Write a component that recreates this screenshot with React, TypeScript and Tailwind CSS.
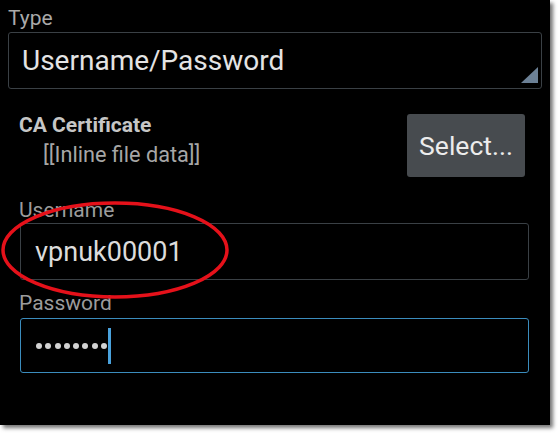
const font = { fontFamily: "Roboto, 'Noto Sans', sans-serif" };

export default function App() {
  return (
    <div className="w-[558px] h-[433px] bg-white" style={font}>
      <div className="relative w-[550px] h-[425px] bg-black shadow-[3px_3px_4px_rgba(0,0,0,0.55)] flex flex-col">
        {/* Type */}
        <p className="pt-[6px] pl-[8px] text-[21px] leading-[24px] text-[#a9a9a9]">Type</p>
        <div className="relative mt-[2px] ml-[8px] w-[534px] h-[57px] border border-[#3a4045] rounded-[3px] flex items-center pl-[13px]">
          <span className="text-[28px] leading-[30px] text-[#e4e4e4]">Username/Password</span>
          <svg className="absolute right-[3px] bottom-[5px]" width="17" height="16" viewBox="0 0 17 16">
            <polygon points="17,0 17,16 0,16" fill="#6c8196" />
          </svg>
        </div>

        {/* CA certificate */}
        <div className="mt-[25px] pl-[19px] pr-[25px] flex items-start">
          <div className="flex flex-col">
            <p className="text-[21px] leading-[22px] font-bold text-[#c6c6c6]">CA Certificate</p>
            <p className="mt-[8px] pl-[24px] text-[21.7px] leading-[22px] text-[#a6a6a6]">[[Inline file data]]</p>
          </div>
          <button className="ml-auto w-[118px] h-[63px] rounded-[3px] bg-[#474b4f] text-[26.5px] leading-[30px] text-[#ececec]">
            Select...
          </button>
        </div>

        {/* Username */}
        <p className="mt-[22px] pl-[19px] text-[21px] leading-[22px] text-[#9c9c9c]">Username</p>
        <div className="mt-[2px] ml-[20px] w-[509px] h-[57px] border border-[#3a4045] rounded-[3px] flex items-center pl-[14px]">
          <span className="text-[27px] leading-[30px] text-[#dcdcdc]">vpnuk00001</span>
        </div>

        {/* Password */}
        <p className="mt-[12px] pl-[19px] text-[21px] leading-[22px] text-[#9c9c9c]">Password</p>
        <div className="mt-[4px] ml-[20px] w-[509px] h-[55px] border border-[#3b8cbd] rounded-[3px] flex items-center pl-[15px]">
          <div className="flex items-center gap-[3.3px]">
            {Array.from({ length: 8 }).map((_, i) => (
              <span key={i} className="w-[6px] h-[6px] rounded-full bg-[#d2d2d2]" />
            ))}
          </div>
          <span className="ml-[1px] w-[3px] h-[36px] bg-[#4aa2dc]" />
        </div>

        {/* annotation */}
        <svg className="absolute left-0 top-0 pointer-events-none" width="550" height="425">
          <ellipse cx="115" cy="250" rx="112" ry="47" fill="none" stroke="#e5111a" strokeWidth="3.5" />
        </svg>
      </div>
    </div>
  );
}
